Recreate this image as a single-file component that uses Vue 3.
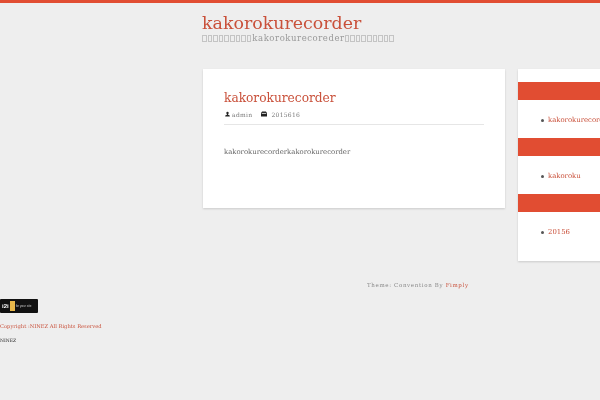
<script setup>
const widgets = [
  { text: 'kakorokurecorder' },
  { text: 'kakoroku' },
  { text: '20156' }
]
const boxesA = 9
const boxesB = 9
</script>

<template>
  <div class="page">
    <div class="topbar"></div>
    <header class="site-head">
      <h1 class="site-title">kakorokurecorder</h1>
      <p class="site-sub"><i v-for="n in boxesA" :key="'a' + n" class="tofu"></i>kakorokurecoreder<i v-for="n in boxesB" :key="'b' + n" class="tofu"></i></p>
    </header>
    <div class="columns">
      <main class="post">
        <h2 class="post-title">kakorokurecorder</h2>
        <div class="meta">
          <svg class="ico" viewBox="0 0 8 8"><circle cx="4" cy="2.2" r="1.9" fill="#222" /><path d="M3 4h2v1.2L7.6 6.5V8H.4V6.5L3 5.2z" fill="#222" /></svg>
          <span class="meta-t first">admin</span>
          <svg class="ico ico2" viewBox="0 0 8 8"><path d="M1.5.6h5L8 2.6V7.4H0V2.6z" fill="#222" /><rect x="1" y="2.6" width="6" height="1" fill="#fff" /></svg>
          <span class="meta-t">2015616</span>
        </div>
        <p class="body">kakorokurecorderkakorokurecorder</p>
      </main>
      <aside class="side">
        <section v-for="w in widgets" :key="w.text" class="widget">
          <div class="band"></div>
          <ul class="list"><li class="item"><span class="link">{{ w.text }}</span></li></ul>
        </section>
      </aside>
    </div>
    <div class="credit">Theme: Convention By <span class="link">Fimply</span></div>
    <footer class="foot">
      <div class="badge">
        <span class="b-a">i2i</span><span class="b-b"></span><span class="b-c">for your site</span>
      </div>
      <p class="copy">Copyright :NINEZ All Rights Reserved</p>
      <p class="nz">NINEZ</p>
    </footer>
  </div>
</template>

<style>
html, body { margin: 0; background: #eeeeee; overflow: hidden; }
</style>

<style scoped>
.page { width: 600px; height: 400px; overflow: hidden; background: #eee; font-family: "DejaVu Serif", serif; will-change: transform; }
.topbar { height: 3px; background: #e14d32; }
.site-head { padding: 10px 0 0 202px; height: 55px; box-sizing: border-box; }
.site-title { margin: 0; font-size: 17.4px; font-weight: 400; line-height: 20px; color: #c9503a; white-space: nowrap; }
.site-sub { margin: 0; font-size: 8.5px; line-height: 10px; color: #999; letter-spacing: .55px; white-space: nowrap; display: flex; align-items: center; }
.tofu { flex: none; width: 4.6px; height: 7px; margin-right: 1px; box-sizing: border-box; border: 1px solid #c4c4c4; }
.columns { display: flex; align-items: flex-start; margin-top: 11px; padding-left: 203px; gap: 13px; }
.post { flex: none; width: 302px; height: 139px; box-sizing: border-box; background: #fff; box-shadow: 0 1px 2px rgba(0,0,0,.15); padding: 21px 21px 0; }
.post-title { margin: 0 0 1px; font-size: 12.2px; line-height: 17px; font-weight: 400; color: #c9503a; white-space: nowrap; }
.meta { display: flex; align-items: center; height: 10px; padding: 1px 0 5px 1px; border-bottom: 1px solid #e6e6e6; font-size: 6px; color: #777; }
.ico { width: 5px; height: 6px; flex: none; }
.ico2 { width: 6px; }
.meta-t { margin-left: 2px; letter-spacing: .3px; }
.meta-t.first { margin-right: 9px; }
.ico2 + .meta-t { margin-left: 4px; }
.body { margin: 21px 0 0; font-size: 6.9px; line-height: 12px; color: #666; white-space: nowrap; }
.side { flex: none; width: 120px; height: 192px; box-sizing: border-box; background: #fff; box-shadow: 0 1px 2px rgba(0,0,0,.15); padding-top: 13px; }
.widget { height: 56px; }
.band { height: 18px; background: #e14d32; }
.list { margin: 0; padding: 14px 0 0 23px; list-style: none; font-size: 6.9px; line-height: 12px; white-space: nowrap; }
.item { display: flex; align-items: center; gap: 4px; }
.item::before { content: ""; flex: none; width: 3px; height: 3px; border-radius: 50%; background: #555; }
.link { color: #c9503a; }
.credit { margin-top: 19px; padding-left: 367px; font-size: 5.5px; line-height: 10px; letter-spacing: .65px; color: #888; white-space: nowrap; }
.foot { margin-top: 9px; }
.badge { width: 38px; height: 14px; background: #111; border-radius: 1px; display: flex; align-items: center; gap: 1px; padding-left: 2px; box-sizing: border-box; overflow: hidden; }
.b-a { font: 700 6px/1 "Liberation Sans", sans-serif; color: #fff; }
.b-b { width: 5px; height: 10px; background: #e8b84a; }
.b-c { font: 3px/1 "Liberation Sans", sans-serif; color: #ccc; white-space: nowrap; }
.copy { margin: 9px 0 0; font-size: 5.2px; line-height: 8px; color: #c9503a; white-space: nowrap; }
.nz { margin: 8px 0 0; font-size: 4.5px; line-height: 6px; color: #222; }
</style>
